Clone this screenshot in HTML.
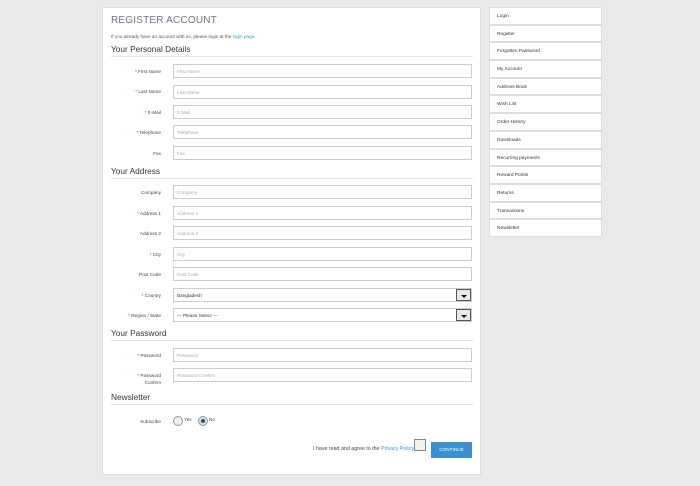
<!DOCTYPE html>
<html><head><style>
*{margin:0;padding:0;box-sizing:border-box}
body{width:700px;height:486px;background:#e9e9e9;font-family:"Liberation Sans",sans-serif;position:relative;overflow:hidden}
.main{position:absolute;left:102px;top:7px;width:379px;height:468px;background:#fff;border:1px solid #ddd}
.a{position:absolute}
.t{left:111px;top:15px;font-size:10px;color:#6b7688;letter-spacing:.2px}
.intro{left:111px;top:34px;font-size:4.7px;color:#555}
.intro span{color:#2a9bd6}
.h{position:absolute;left:111px;font-size:8.3px;color:#333;width:362px;border-bottom:1px solid #e3e3e3;padding-bottom:2px;line-height:9px}
.lb{position:absolute;right:539px;font-size:4.7px;color:#444;text-align:right;line-height:7px}
.lb b{color:#e22;font-weight:normal}
.in{position:absolute;left:173px;width:299px;height:14px;border:1px solid #ccc;font-size:4.7px;color:#aaa;padding:4px 0 0 3px}
.sel{color:#333}
.arr{position:absolute;right:0;top:0;width:15px;height:12px;border:1px solid #555;background:#e8e8e8}
.arr:after{content:"";position:absolute;left:4px;top:5px;border-left:3px solid transparent;border-right:3px solid transparent;border-top:3px solid #111}
.side{position:absolute;left:489px;top:7px;width:113px}
.side div{height:17.7px;background:#fff;border:1px solid #ddd;font-size:4.8px;color:#333;padding:6px 0 0 7px}
</style></head><body>
<div class="main"></div>
<div class="a t">REGISTER ACCOUNT</div>
<div class="a intro">If you already have an account with us, please login at the <span>login page</span>.</div>
<div class="h" style="top:45px">Your Personal Details</div>
<div class="lb" style="top:68px"><b>* </b>First Name</div><div class="in" style="top:64px">First Name</div>
<div class="lb" style="top:88px"><b>* </b>Last Name</div><div class="in" style="top:85px">Last Name</div>
<div class="lb" style="top:109px"><b>* </b>E-Mail</div><div class="in" style="top:105px">E-Mail</div>
<div class="lb" style="top:129px"><b>* </b>Telephone</div><div class="in" style="top:125px">Telephone</div>
<div class="lb" style="top:150px">Fax</div><div class="in" style="top:146px">Fax</div>
<div class="h" style="top:167px">Your Address</div>
<div class="lb" style="top:189px">Company</div><div class="in" style="top:185px">Company</div>
<div class="lb" style="top:210px"><b>* </b>Address 1</div><div class="in" style="top:206px">Address 1</div>
<div class="lb" style="top:230px">Address 2</div><div class="in" style="top:226px">Address 2</div>
<div class="lb" style="top:251px"><b>* </b>City</div><div class="in" style="top:247px">City</div>
<div class="lb" style="top:271px">Post Code</div><div class="in" style="top:267px">Post Code</div>
<div class="lb" style="top:292px"><b>* </b>Country</div><div class="in sel" style="top:288px">Bangladesh<div class="arr"></div></div>
<div class="lb" style="top:312px"><b>* </b>Region / State</div><div class="in sel" style="top:308px">--- Please Select ---<div class="arr"></div></div>
<div class="h" style="top:329px">Your Password</div>
<div class="lb" style="top:352px"><b>* </b>Password</div><div class="in" style="top:348px">Password</div>
<div class="lb" style="top:372px"><b>* </b>Password<br>Confirm</div><div class="in" style="top:368px">Password Confirm</div>
<div class="h" style="top:393px">Newsletter</div>
<div class="lb" style="top:418px">Subscribe</div>
<div class="a" style="left:173px;top:416px;width:10px;height:10px;border-radius:50%;border:1px solid #999;background:#eee"></div>
<div class="a" style="left:184px;top:417px;font-size:4.7px;color:#444">Yes</div>
<div class="a" style="left:198px;top:416px;width:10px;height:10px;border-radius:50%;border:1px solid #999;background:#ddd"><div style="position:absolute;left:2px;top:2px;width:4px;height:4px;border-radius:50%;background:#1a5a8a"></div></div>
<div class="a" style="left:209px;top:417px;font-size:4.7px;color:#444">No</div>
<div class="a" style="left:313px;top:446px;font-size:5.3px;color:#444;white-space:nowrap">I have read and agree to the <span style="color:#2a9bd6">Privacy Policy</span></div>
<div class="a" style="left:414px;top:439px;width:12px;height:12px;border:1px solid #888;background:#f2f2f2"></div>
<div class="a" style="left:431px;top:442px;width:41px;height:16px;background:#3a8fd0;color:#fff;font-size:4.7px;text-align:center;padding-top:5px">CONTINUE</div>
<div class="side">
<div>Login</div><div>Register</div><div>Forgotten Password</div><div>My Account</div><div>Address Book</div><div>Wish List</div><div>Order History</div><div>Downloads</div><div>Recurring payments</div><div>Reward Points</div><div>Returns</div><div>Transactions</div><div>Newsletter</div>
</div>
</body></html>
